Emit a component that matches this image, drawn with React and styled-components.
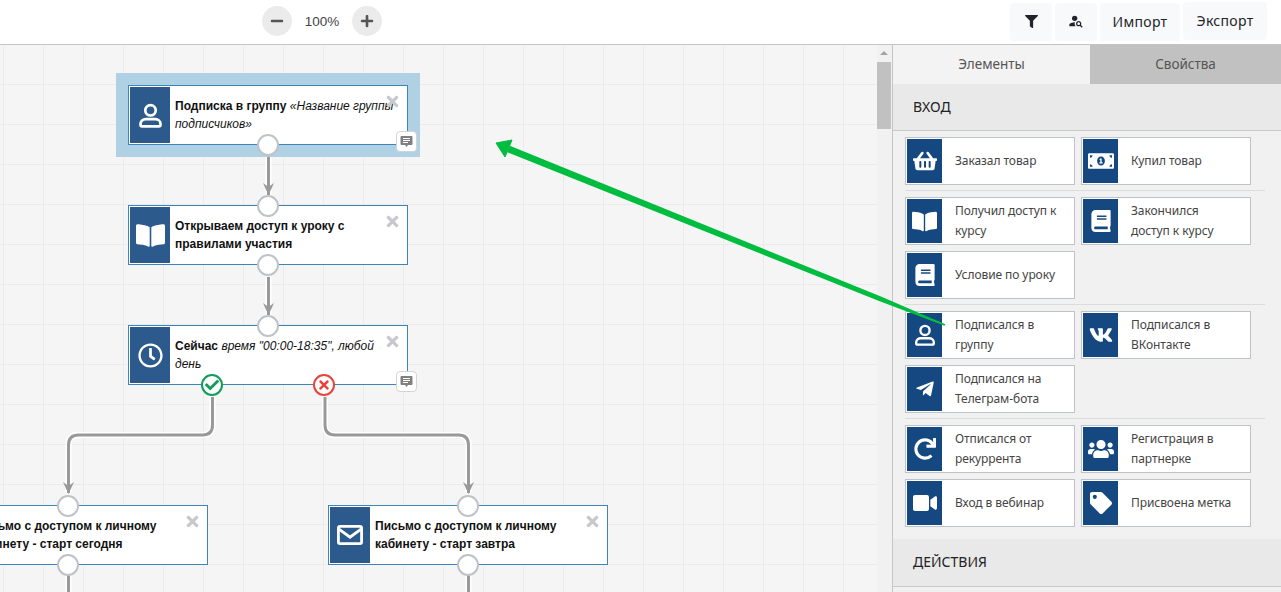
import React from "react";
import styled, { createGlobalStyle } from "styled-components";
import {
  FaMinus, FaPlus, FaFilter, FaShoppingBasket, FaMoneyBillAlt, FaBookOpen, FaBook,
  FaVk, FaTelegramPlane, FaRedo, FaUsers, FaVideo, FaTag, FaTimes, FaCheck,
  FaRegClock,
} from "react-icons/fa";
import { MdPersonSearch } from "react-icons/md";

const GlobalStyle = createGlobalStyle`
  html, body { margin: 0; padding: 0; height: 100%; overflow: hidden; background: #fff; }
  * { box-sizing: border-box; }
`;

const Page = styled.div`
  width: 1281px;
  height: 592px;
  display: flex;
  flex-direction: column;
  position: relative;
  overflow: hidden;
  font-family: "Noto Sans", sans-serif;
`;

const Topbar = styled.header`
  height: 45px;
  flex: none;
  border-bottom: 1px solid #c4c4c4;
  display: flex;
  align-items: flex-start;
  background: #fff;
`;

const Zoom = styled.div`
  margin: 6px 0 0 262px;
  display: flex;
  align-items: center;
`;

const ZoomBtn = styled.button`
  width: 30px;
  height: 30px;
  border: 0;
  padding: 0;
  border-radius: 50%;
  background: #ebebeb;
  color: #555;
  font-size: 14px;
  display: flex;
  align-items: center;
  justify-content: center;
`;

const ZoomValue = styled.span`
  width: 60px;
  text-align: center;
  font: 13.5px "Liberation Sans", sans-serif;
  color: #444;
`;

const Tools = styled.div`
  margin-left: auto;
  padding: 3px 14px 0 0;
  display: flex;
  gap: 3px;
`;

const ToolBtn = styled.button`
  height: 38px;
  width: ${(p) => p.$w}px;
  margin-top: ${(p) => p.$top || 0}px;
  border: 0;
  padding: 0 0 2px;
  border-radius: 4px;
  background: #f8f9fa;
  color: #212529;
  font: 14px "Noto Sans", sans-serif;
  letter-spacing: 0.3px;
  display: flex;
  align-items: center;
  justify-content: center;
`;

const Main = styled.div`
  flex: 1;
  display: flex;
  min-height: 0;
`;

const Canvas = styled.div`
  position: relative;
  flex: 1;
  overflow: hidden;
  background-color: #f5f5f5;
  background-image:
    linear-gradient(#ebebeb 1px, transparent 1px),
    linear-gradient(90deg, #ebebeb 1px, transparent 1px);
  background-size: 40px 40px;
  background-position: 3px -1px;
`;

const Scrollbar = styled.div`
  width: 15px;
  flex: none;
  background: #f1f1f1;
  position: relative;
`;

const ScrollUp = styled.div`
  position: absolute;
  left: 3px;
  top: 6px;
  width: 0;
  height: 0;
  border-left: 4px solid transparent;
  border-right: 4px solid transparent;
  border-bottom: 4px solid #a3a3a3;
`;

const ScrollThumb = styled.div`
  position: absolute;
  left: 0;
  top: 17px;
  width: 14px;
  height: 67px;
  background: #c1c1c1;
`;

const Sidebar = styled.aside`
  width: 389px;
  flex: none;
  background: #f1f1f1;
  border-left: 1px solid #c4c4c4;
  display: flex;
  flex-direction: column;
`;

const Tabs = styled.div`
  display: flex;
  height: 39px;
  flex: none;
`;

const Tab = styled.div`
  width: ${(p) => p.$w}px;
  padding-bottom: 2px;
  display: flex;
  align-items: center;
  justify-content: center;
  font-size: 13.5px;
  color: #555;
  background: ${(p) => (p.$active ? "#f3f3f3" : "#c1c1c1")};
`;

const SectionTitle = styled.div`
  height: ${(p) => p.$h}px;
  flex: none;
  display: flex;
  align-items: center;
  padding: 0 0 2px 20px;
  font-size: 14px;
  color: #222;
  background: #e9e9e9;
  border-bottom: 1px solid #c9c9c9;
`;

const Groups = styled.div`
  padding: 6px 0 0 12px;
  display: flex;
  flex-direction: column;
`;

const Group = styled.div`
  display: grid;
  grid-template-columns: 170px 170px;
  column-gap: 6px;
  row-gap: 6px;
  width: 360px;
  padding-bottom: 5px;
  margin-bottom: 6px;
  border-bottom: 1px solid ${(p) => (p.$last ? "transparent" : "#dcdcdc")};
`;

const Item = styled.div`
  height: 48px;
  display: flex;
  align-items: stretch;
  background: #fff;
  border: 1px solid #bec3c9;
  padding: 1px;
  font-size: 12px;
  line-height: 20px;
  letter-spacing: -0.08px;
  color: #444;
`;

const ItemIcon = styled.span`
  width: 35px;
  flex: none;
  background: #154880;
  color: #fff;
  font-size: ${(p) => p.$size}px;
  display: flex;
  align-items: center;
  justify-content: center;
`;

const ItemText = styled.span`
  margin-left: 13px;
  align-self: center;
  width: 106px;
`;

const NodeBox = styled.div`
  position: absolute;
  left: ${(p) => p.$x}px;
  top: ${(p) => p.$y}px;
  width: 280px;
  height: 60px;
  padding: 1px;
  display: flex;
  background: #fff;
  border: 1px solid #3c85b8;
  font: 12px/18px "Liberation Sans", sans-serif;
  color: #111;
`;

const Halo = styled.div`
  position: absolute;
  left: 116px;
  top: 28px;
  width: 304px;
  height: 84px;
  background: #b0d0e3;
`;

const NodeIcon = styled.div`
  width: 40px;
  flex: none;
  background: #2c5a8c;
  color: #fff;
  font-size: ${(p) => p.$size}px;
  display: flex;
  align-items: center;
  justify-content: center;
`;

const NodeText = styled.div`
  margin-left: 5px;
  align-self: center;
  width: 226px;
  b { font-weight: 700; }
  i { font-style: italic; }
`;

const NodeClose = styled.span`
  position: absolute;
  right: 6px;
  top: 7px;
  color: #c5c8cc;
  font-size: 17px;
  line-height: 17px;
  display: flex;
`;

const Port = styled.span`
  position: absolute;
  left: 128px;
  top: ${(p) => (p.$bottom ? 48 : -11)}px;
  width: 22px;
  height: 22px;
  border-radius: 50%;
  background: #fff;
  border: 2px solid #bfc3c7;
`;

const StatePort = styled.span`
  position: absolute;
  left: ${(p) => p.$left}px;
  top: 48px;
  width: 22px;
  height: 22px;
  border-radius: 50%;
  background: #fff;
  border: 2px solid ${(p) => p.$color};
  color: ${(p) => p.$color};
  font-size: 14px;
  display: flex;
  align-items: center;
  justify-content: center;
`;

const Note = styled.span`
  position: absolute;
  right: -10px;
  top: 45px;
  width: 21px;
  height: 21px;
  border-radius: 4px;
  background: #fff;
  border: 1px solid #d4d4d4;
  color: #808080;
  display: flex;
  align-items: center;
  justify-content: center;
`;

const Wires = styled.svg`
  position: absolute;
  left: 0;
  top: 0;
`;

const Pointer = styled.svg`
  position: absolute;
  left: 0;
  top: 0;
  pointer-events: none;
`;

const UserIcon = () => (
  <svg width="1em" height="1em" viewBox="0 0 24 24" fill="none" stroke="currentColor" strokeWidth="2.6">
    <circle cx="12" cy="7" r="5" />
    <path d="M4 22.500h16c1 0 1.600-.6 1.600-1.600v-1c0-2.600-2.400-4.400-5-4.400H7.400c-2.600 0-5 1.800-5 4.400v1c0 1 .6 1.600 1.600 1.600z" />
  </svg>
);

const EnvelopeIcon = () => (
  <svg width="1em" height="1em" viewBox="0 0 24 24" fill="none" stroke="currentColor" strokeWidth="2.600">
    <rect x="1.300" y="4" width="21.400" height="16" rx="1.500" />
    <path d="M1.800 6.500l10.200 7.500 10.200-7.500" />
  </svg>
);

const NoteIcon = () => (
  <svg width="13" height="13" viewBox="0 0 13 13">
    <path fill="currentColor" d="M1.500 1h10c.5 0 1 .5 1 1v7c0 .5-.5 1-1 1H8l-1.500 2L5 10H1.500c-.5 0-1-.5-1-1V2c0-.5.5-1 1-1z" />
    <path stroke="#fff" strokeWidth="1" d="M3 3.500h7M3 5.500h7M3 7.500h5" />
  </svg>
);

const NODES = [
  { x: 128, y: 40, icon: <UserIcon />, size: 25, title: "Подписка в группу", note: "«Название группы подписчиков»", comment: true, halo: true },
  { x: 128, y: 160, icon: <FaBookOpen />, size: 29, title: "Открываем доступ к уроку с правилами участия", top: true },
  { x: 128, y: 280, icon: <FaRegClock />, size: 25, title: "Сейчас", note: 'время "00:00-18:35", любой день', comment: true, top: true, states: true },
  { x: -72, y: 460, icon: <EnvelopeIcon />, size: 26, title: "Письмо с доступом к личному кабинету - старт сегодня", top: true },
  { x: 328, y: 460, icon: <EnvelopeIcon />, size: 26, title: "Письмо с доступом к личному кабинету - старт завтра", top: true },
];

const GROUPS = [
  [["Заказал товар", <FaShoppingBasket />, 24], ["Купил товар", <FaMoneyBillAlt />, 26]],
  [["Получил доступ к курсу", <FaBookOpen />, 25], ["Закончился доступ к курсу", <FaBook />, 22], ["Условие по уроку", <FaBook />, 22]],
  [["Подписался в группу", <UserIcon />, 22], ["Подписался в ВКонтакте", <FaVk />, 24], ["Подписался на Телеграм-бота", <FaTelegramPlane />, 20]],
  [["Отписался от рекуррента", <FaRedo />, 22], ["Регистрация в партнерке", <FaUsers />, 26], ["Вход в вебинар", <FaVideo />, 24], ["Присвоена метка", <FaTag />, 22]],
];

const WIRES = [
  "M268.500 112V150",
  "M268.500 232V270",
  "M212.500 352V380Q212.500 390 202.500 390H78.500Q68.500 390 68.500 400V448",
  "M325 352V380Q325 390 335 390H458.500Q468.500 390 468.500 400V448",
  "M68.500 530V560",
  "M468.500 530V560",
];

const HEADS = [[268.5, 138], [268.5, 258], [68.5, 437], [468.5, 437]];

function Node({ x, y, icon, size, title, note, comment, halo, top, states }) {
  return (
    <>
      {halo && <Halo />}
      <NodeBox $x={x} $y={y}>
        <NodeIcon $size={size}>{icon}</NodeIcon>
        <NodeText>
          <b>{title}</b>
          {note && <i> {note}</i>}
        </NodeText>
        <NodeClose><FaTimes /></NodeClose>
        {top && <Port />}
        {states ? (
          <>
            <StatePort $left={72} $color="#0f9d58"><FaCheck /></StatePort>
            <StatePort $left={184} $color="#e8443c"><FaTimes /></StatePort>
          </>
        ) : (
          <Port $bottom />
        )}
        {comment && <Note><NoteIcon /></Note>}
      </NodeBox>
    </>
  );
}

export default function App() {
  return (
    <Page>
      <GlobalStyle />
      <Topbar>
        <Zoom>
          <ZoomBtn><FaMinus /></ZoomBtn>
          <ZoomValue>100%</ZoomValue>
          <ZoomBtn><FaPlus /></ZoomBtn>
        </Zoom>
        <Tools>
          <ToolBtn $w={42}><FaFilter size={13} /></ToolBtn>
          <ToolBtn $w={42}><MdPersonSearch size={16} /></ToolBtn>
          <ToolBtn $w={80}>Импорт</ToolBtn>
          <ToolBtn $w={84} $top={-1}>Экспорт</ToolBtn>
        </Tools>
      </Topbar>
      <Main>
        <Canvas>
          <Wires width="877" height="547">
            <g fill="none" strokeLinejoin="round">
              {WIRES.map((d) => <path key={d} d={d} stroke="#fff" strokeWidth="6" />)}
              {WIRES.map((d) => <path key={d} d={d} stroke="#999" strokeWidth="3" />)}
            </g>
            <g fill="#999">
              {HEADS.map(([x, y]) => (
                <path key={x + "-" + y} d={`M${x - 5.5} ${y}l5.500 4 5.500-4-5.500 12z`} />
              ))}
            </g>
          </Wires>
          {NODES.map((n) => <Node key={n.x + "-" + n.y} {...n} />)}
        </Canvas>
        <Scrollbar>
          <ScrollUp />
          <ScrollThumb />
        </Scrollbar>
        <Sidebar>
          <Tabs>
            <Tab $w={197} $active>Элементы</Tab>
            <Tab $w={191}>Свойства</Tab>
          </Tabs>
          <SectionTitle $h={47}>ВХОД</SectionTitle>
          <Groups>
            {GROUPS.map((group, i) => (
              <Group key={i} $last={i === GROUPS.length - 1}>
                {group.map(([label, icon, size]) => (
                  <Item key={label}>
                    <ItemIcon $size={size}>{icon}</ItemIcon>
                    <ItemText>{label}</ItemText>
                  </Item>
                ))}
              </Group>
            ))}
          </Groups>
          <SectionTitle $h={48}>ДЕЙСТВИЯ</SectionTitle>
        </Sidebar>
      </Main>
      <Pointer width="1281" height="592">
        <path d="M945.400 324.200L880.900 296.600L509.800 145.800L507.200 152.200L879.100 301L944.600 325.800z" fill="#00bc3f" />
        <path d="M496 143L512 140L505 157z" fill="#00bc3f" stroke="#00bc3f" strokeWidth="1" strokeLinejoin="round" />
      </Pointer>
    </Page>
  );
}
